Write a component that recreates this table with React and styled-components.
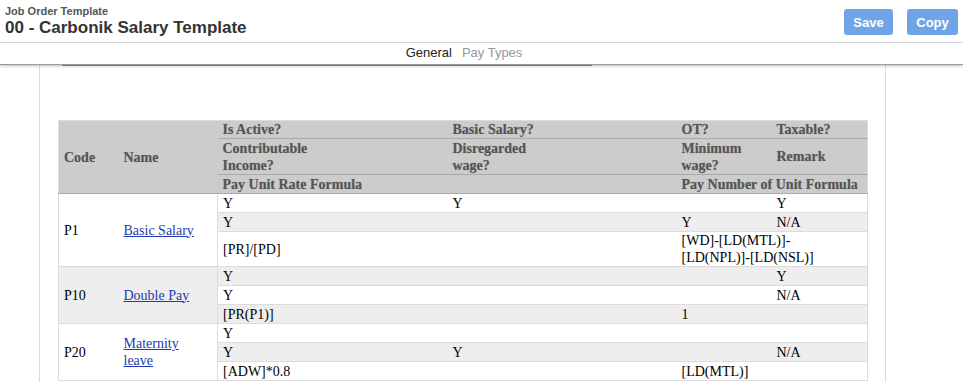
import styled, { createGlobalStyle } from "styled-components"

const GlobalStyle = createGlobalStyle`
    body {
        margin: 0;
        background: #fff;
        font-family: "Liberation Sans", Arial, sans-serif;
    }
`

const Header = styled.div`
    display: flex;
    justify-content: space-between;
    align-items: flex-start;
    height: 42px;
    padding: 0 5px;
    border-bottom: 1px solid #dcdcdc;
`
const TitleBlock = styled.div`
    padding-top: 5px;
`
const Kicker = styled.div`
    font-size: 11px;
    font-weight: bold;
    line-height: 13px;
    color: #555;
`
const Title = styled.h1`
    margin: 0;
    font-size: 17px;
    line-height: 20px;
    font-weight: bold;
    color: #333;
`
const Actions = styled.div`
    display: flex;
    gap: 14px;
    margin-top: 9px;
`
const Button = styled.button`
    height: 26px;
    min-width: ${props => props.$w}px;
    padding: 0 8px;
    border: none;
    border-radius: 3px;
    background: #6fa5e6;
    color: #fff;
    font-family: "Liberation Sans", Arial, sans-serif;
    font-size: 13px;
    font-weight: bold;
`
const Tabs = styled.div`
    position: relative;
    z-index: 1;
    display: flex;
    justify-content: center;
    gap: 10px;
    height: 21px;
    padding-right: 35px;
    font-size: 13px;
    line-height: 20px;
    border-bottom: 1px solid #9a9a9a;
    box-shadow: 0 1px 3px rgba(0,0,0,0.25);
`
const Tab = styled.span`
    color: ${props => props.$active ? "#222" : "#999"};
`
const Panel = styled.div`
    margin-left: 39px;
    width: 809px;
    min-height: 320px;
    padding: 0 18px;
    border-left: 1px solid #dcdcdc;
    border-right: 1px solid #dcdcdc;
`
const ScrollEdge = styled.div`
    width: 530px;
    height: 1px;
    margin: 0 0 54px 4px;
    background: #8b93a6;
`
const Table = styled.table`
    width: 809px;
    table-layout: fixed;
    border-collapse: collapse;
    border: 1px solid #dcdcdc;
    font-family: "Liberation Serif", "Times New Roman", serif;
    font-size: 14px;
    line-height: 17px;
`
const Th = styled.th`
    height: ${props => props.$h}px;
    padding: 0 5px;
    box-sizing: border-box;
    background: #cccccc;
    color: #555;
    text-align: left;
    font-weight: bold;
    vertical-align: middle;
    text-shadow: 0 0 1px #9a9a9a;
    border-bottom: 1px solid #a9a9a9;
`
const Row = styled.tr`
    background: ${props => props.$alt ? "#eeeeee" : "#fff"};
`
const Td = styled.td`
    padding: 0 5px;
    color: #000;
    vertical-align: middle;
    border-bottom: 1px solid #dcdcdc;
`
const FirstTd = styled(Td)`
    height: 18px;
`
const KeyCell = styled(Td)`
    padding: 0 ${props => props.$name ? 12 : 5}px 0 5px;
    ${props => props.$name && "border-right: 1px solid #dcdcdc;"}
`
const Link = styled.a`
    color: #1f3bb0;
    text-decoration: underline;
`

const payTypes = [
    {
        code: "P1", name: "Basic Salary",
        rows: [["Y", "Y", "", "Y"], ["Y", "", "Y", "N/A"]],
        formula: ["[PR]/[PD]", <>[WD]-[LD(MTL)]-<br />[LD(NPL)]-[LD(NSL)]</>],
    },
    {
        code: "P10", name: "Double Pay",
        rows: [["Y", "", "", "Y"], ["Y", "", "", "N/A"]],
        formula: ["[PR(P1)]", "1"],
    },
    {
        code: "P20", name: "Maternity leave",
        rows: [["Y", "", "", ""], ["Y", "Y", "", "N/A"]],
        formula: ["[ADW]*0.8", "[LD(MTL)]"],
    },
]

const App = () => {
    let n = 0
    return (
        <>
            <GlobalStyle />
            <Header>
                <TitleBlock>
                    <Kicker>Job Order Template</Kicker>
                    <Title>00 - Carbonik Salary Template</Title>
                </TitleBlock>
                <Actions>
                    <Button $w={49}>Save</Button>
                    <Button $w={51}>Copy</Button>
                </Actions>
            </Header>
            <Tabs>
                <Tab $active>General</Tab>
                <Tab>Pay Types</Tab>
            </Tabs>
            <Panel>
                <ScrollEdge />
                <Table>
                    <colgroup>
                        <col style={{ width: 60 }} />
                        <col style={{ width: 99 }} />
                        <col style={{ width: 230 }} />
                        <col style={{ width: 229 }} />
                        <col style={{ width: 95 }} />
                        <col style={{ width: 96 }} />
                    </colgroup>
                    <thead>
                        <tr>
                            <Th rowSpan={3}>Code</Th>
                            <Th rowSpan={3}>Name</Th>
                            <Th $h={18}>Is Active?</Th>
                            <Th $h={18}>Basic Salary?</Th>
                            <Th $h={18}>OT?</Th>
                            <Th $h={18}>Taxable?</Th>
                        </tr>
                        <tr>
                            <Th $h={36}>Contributable<br />Income?</Th>
                            <Th $h={36}>Disregarded<br />wage?</Th>
                            <Th $h={36}>Minimum<br />wage?</Th>
                            <Th $h={36}>Remark</Th>
                        </tr>
                        <tr>
                            <Th $h={19} colSpan={2}>Pay Unit Rate Formula</Th>
                            <Th $h={19} colSpan={2}>Pay Number of Unit Formula</Th>
                        </tr>
                    </thead>
                    <tbody>
                        {payTypes.map(p => {
                            const first = n
                            n += 3
                            return [
                                <Row key={p.code + "a"} $alt={first % 2 === 1}>
                                    <KeyCell rowSpan={3}>{p.code}</KeyCell>
                                    <KeyCell rowSpan={3} $name><Link href="#">{p.name}</Link></KeyCell>
                                    {p.rows[0].map((v, i) => <FirstTd key={i}>{v}</FirstTd>)}
                                </Row>,
                                <Row key={p.code + "b"} $alt={(first + 1) % 2 === 1}>
                                    {p.rows[1].map((v, i) => <FirstTd key={i}>{v}</FirstTd>)}
                                </Row>,
                                <Row key={p.code + "c"} $alt={(first + 2) % 2 === 1}>
                                    <FirstTd colSpan={2}>{p.formula[0]}</FirstTd>
                                    <FirstTd colSpan={2}>{p.formula[1]}</FirstTd>
                                </Row>,
                            ]
                        })}
                    </tbody>
                </Table>
            </Panel>
        </>
    )
}

export default App
